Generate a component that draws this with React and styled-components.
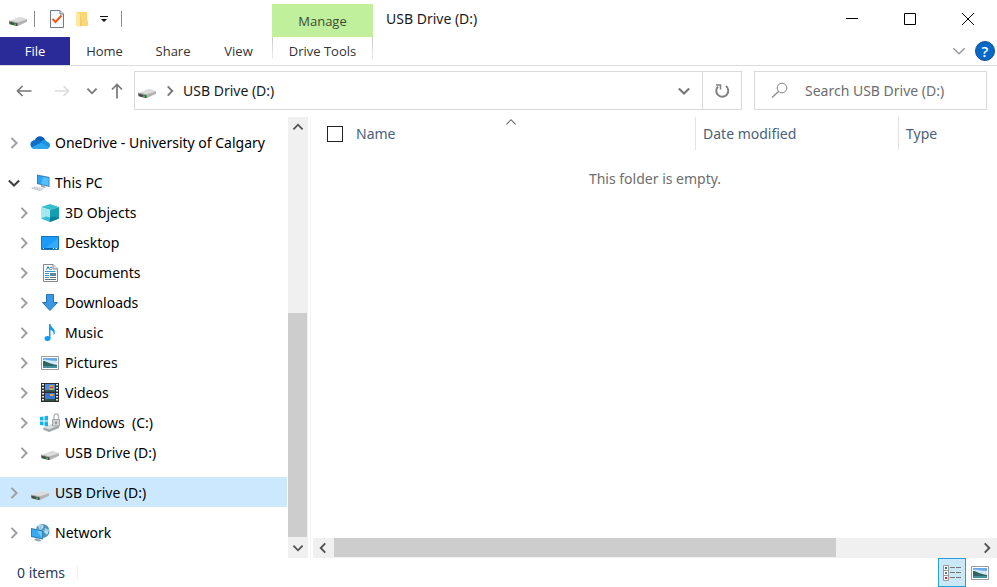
import React from "react";
import styled, { createGlobalStyle, css } from "styled-components";

const GlobalStyle = createGlobalStyle`
  *, *::before, *::after { box-sizing: border-box; }
  html, body { margin: 0; }
  body {
    background: #fff;
    color: #191919;
    font-family: "Noto Sans", "Open Sans", sans-serif;
    font-size: 14px;
    line-height: 20px;
  }
  button, input { font: inherit; color: inherit; }
  svg { display: block; flex: none; }
`;

/* ---------- shared ---------- */

const Window = styled.div`
  display: flex;
  flex-direction: column;
  min-height: 100vh;
  background: #fff;
`;

const PlainButton = styled.button`
  display: flex;
  align-items: center;
  justify-content: center;
  margin: 0;
  padding: 0;
  border: 0;
  background: transparent;
`;

/* ---------- title bar and ribbon tabs ---------- */

const TitleBar = styled.header`
  display: flex;
  height: 37px;
`;

const QuickAccess = styled.div`
  display: flex;
  align-items: center;
  width: 272px;
  padding-left: 8px;
`;

const QuickButton = styled(PlainButton)`
  width: ${(p) => p.$width}px;
  height: 24px;
`;

const Divider = styled.span`
  width: 1px;
  height: 16px;
  margin: 0 ${(p) => p.$after}px 0 ${(p) => p.$before}px;
  background: #8c8c8c;
`;

const ContextLabel = styled.div`
  display: flex;
  align-items: center;
  justify-content: center;
  align-self: flex-end;
  width: 101px;
  height: 33px;
  background: #c1f09c;
  color: #3b4a33;
  font-family: "Open Sans", "Noto Sans", sans-serif;
  font-size: 13px;
`;

const WindowTitle = styled.h1`
  flex: 1;
  margin: 0;
  padding: 9px 0 0 13px;
  font-size: 14px;
  font-weight: 400;
  line-height: 20px;
`;

const WindowButton = styled(PlainButton)`
  width: 58px;
  height: 37px;
`;

const TabBar = styled.nav`
  display: flex;
  height: 29px;
  border-bottom: 1px solid #dadbdc;
  font-family: "Open Sans", "Noto Sans", sans-serif;
  font-size: 13px;
`;

const Tab = styled(PlainButton)`
  width: ${(p) => p.$width}px;
  color: #333;
  ${(p) =>
    p.$file &&
    css`
      background: #2a2a99;
      color: #fff;
    `}
`;

const ContextTab = styled(Tab)`
  height: 22px;
  margin-left: auto;
  padding-top: 6px;
  border: 1px solid;
  border-width: 0 1px;
  border-image: linear-gradient(#c8c8c8, #eeeeee) 1;
`;

const MainTabs = styled.div`
  display: flex;
  width: 373px;
`;

const RibbonTools = styled.div`
  display: flex;
  align-items: center;
  gap: 6px;
  margin-left: auto;
  padding-right: 2px;
`;

/* ---------- address row ---------- */

const AddressRow = styled.div`
  display: flex;
  align-items: center;
  padding: 5px 10px 7px 8px;
`;

const NavButtons = styled.div`
  display: flex;
  width: 126px;
`;

const NavButton = styled(PlainButton)`
  width: ${(p) => p.$width}px;
  height: 32px;
`;

const AddressBox = styled.div`
  display: flex;
  align-items: center;
  flex: 1;
  height: 39px;
  border: 1px solid #d9d9d9;
`;

const Crumb = styled(PlainButton)`
  padding: 0 0 0 2px;
  gap: 5px;
`;

const AddressActions = styled.div`
  display: flex;
  align-self: stretch;
  margin-left: auto;
`;

const AddressButton = styled(PlainButton)`
  width: ${(p) => p.$width}px;
  border-left: ${(p) => (p.$line ? "1px solid #d9d9d9" : "0")};
`;

const SearchBox = styled.label`
  display: flex;
  align-items: center;
  gap: 17px;
  width: 233px;
  height: 39px;
  margin-left: 12px;
  padding-left: 16px;
  border: 1px solid #d9d9d9;
`;

const SearchInput = styled.input`
  flex: 1;
  min-width: 0;
  padding: 0;
  border: 0;
  outline: 0;
  background: transparent;
  &::placeholder {
    color: #6d6d6d;
    opacity: 1;
  }
`;

/* ---------- body ---------- */

const Body = styled.div`
  display: flex;
  flex: 1;
`;

const Sidebar = styled.aside`
  display: flex;
  width: 311px;
  border-right: 1px solid #f4f4f4;
`;

const Tree = styled.ul`
  flex: 1;
  margin: 0;
  padding: 10px 1px 10px 0;
  list-style: none;
`;

const TreeItem = styled.li`
  display: flex;
  align-items: center;
  height: 30px;
  margin-top: ${(p) => (p.$spaced ? 10 : 0)}px;
  padding: 2px 0 0 ${(p) => (p.$nested ? 15 : 5)}px;
  background: ${(p) => (p.$selected ? "#cce8ff" : "transparent")};
`;

const Expander = styled(PlainButton)`
  width: 18px;
  height: 20px;
  margin-right: 7px;
`;

const TreeLabel = styled.button`
  display: flex;
  align-items: center;
  gap: 5px;
  padding: 0;
  border: 0;
  background: transparent;
  color: #000;
  white-space: pre;
`;

const VerticalTrack = styled.div`
  display: flex;
  flex-direction: column;
  width: 20px;
  margin-right: 2px;
  background: #f0f0f0;
`;

const ScrollButton = styled(PlainButton)`
  width: 20px;
  height: 20px;
`;

const VerticalSpace = styled.div`
  display: flex;
  flex-direction: column;
  justify-content: flex-end;
  flex: 1;
  padding-bottom: 1px;
`;

const VerticalThumb = styled.div`
  width: 19px;
  height: 56%;
  background: #cdcdcd;
`;

const Content = styled.main`
  display: flex;
  flex-direction: column;
  flex: 1;
  min-width: 0;
  padding-left: 2px;
`;

const FileTable = styled.table`
  width: 100%;
  border-collapse: separate;
  border-spacing: 0;
  table-layout: fixed;
`;

const HeadCell = styled.th`
  position: relative;
  width: ${(p) => (p.$width ? `${p.$width}px` : "auto")};
  height: 33px;
  padding: 0 0 0 7px;
  border-right: ${(p) => (p.$width ? "1px solid #e2e2e2" : "0")};
  color: #4c607a;
  font-weight: 400;
  text-align: left;
`;

const NameHead = styled.div`
  display: flex;
  align-items: center;
  gap: 13px;
  padding-left: 7px;
`;

const CheckBox = styled.input`
  appearance: none;
  width: 16px;
  height: 16px;
  margin: 0;
  border: 1px solid #222;
  background: #fff;
`;

const SortMark = styled.span`
  position: absolute;
  top: -3px;
  right: 176px;
`;

const EmptyCell = styled.td`
  height: 58px;
  padding: 0;
  color: #6d6d6d;
  text-align: center;
`;

const HorizontalTrack = styled.div`
  display: flex;
  height: 20px;
  margin-top: auto;
  background: #f0f0f0;
`;

const HorizontalSpace = styled.div`
  flex: 1;
  padding-left: 1px;
`;

const HorizontalThumb = styled.div`
  width: 78%;
  height: 19px;
  background: #cdcdcd;
`;

/* ---------- status bar ---------- */

const StatusBar = styled.footer`
  display: flex;
  align-items: center;
  height: 29px;
  padding-left: 17px;
  color: #26395f;
`;

const StatusText = styled.span`
  width: 61px;
  border-right: 1px solid #f0f0f0;
  line-height: 14px;
`;

const ViewButtons = styled.div`
  display: flex;
  margin-left: auto;
  padding-right: 3px;
`;

const ViewButton = styled(PlainButton)`
  width: 28px;
  height: 29px;
  border: 1px solid ${(p) => (p.$active ? "#26a0da" : "transparent")};
  background: ${(p) => (p.$active ? "#cbe8f6" : "transparent")};
`;

/* ---------- icons ---------- */

const paths = {
  right: "M5 3 L9 7 L5 11",
  left: "M9 3 L5 7 L9 11",
  down: "M3 5 L7 9 L11 5",
  up: "M3 9 L7 5 L11 9",
};

const Chevron = ({ to, color = "#a0a0a0", weight = 1.6, size = 16 }) => (
  <svg width={size} height={size} viewBox="0 0 14 14" fill="none" stroke={color} strokeWidth={weight} aria-hidden="true">
    <path d={paths[to]} />
  </svg>
);

const Icon = ({ children, width = 20, height = 20 }) => (
  <svg width={width} height={height} viewBox={`0 0 ${width} ${height}`} aria-hidden="true">
    {children}
  </svg>
);

const DriveIcon = () => (
  <Icon>
    <path d="M1 12.500 C1 12 2 11.500 3 11.200 L11 8.200 C12 8 13 8 14 8.300 L18.500 9.800 L19 10.500 L10 14 Z" fill="#dcdcdc" />
    <path d="M9.500 13.500 L19 10.200 V12.800 L10 17 Z" fill="#b2b2b2" />
    <path d="M1 12 L9.700 14 V17 L8.500 17 L1.500 15.200 Z" fill="#484b4a" />
    <path d="M1 12 L9.700 14" stroke="#a6a6a6" />
    <path d="M6 15 L8 15.500" stroke="#35c946" strokeWidth="1.300" />
  </Icon>
);

const CloudIcon = () => (
  <Icon>
    <path d="M5 7 C6.500 2 13.500 2 15 7 L13 12 L5 9 Z" fill="#0a5bb8" />
    <path d="M4.500 15.500 C-1 15 -1 7.500 5 7 C7 6 9 6.500 11 8 L13 15 Z" fill="#0f6fca" />
    <path d="M11 9 C13 6.500 15.500 6.500 17 8.800 C21 9.500 21 15 17 16 H13 Z" fill="#1c91e3" />
    <path d="M1.500 14.500 L11 9.500 L19 14.500 C18 15.800 17 16 16 16 H5 C3.500 16 2.500 15.500 1.500 14.500 Z" fill="#2ba6ee" />
  </Icon>
);

const PcIcon = () => (
  <Icon>
    <path d="M7 1.500 L19.500 4 V14 L7 11 Z" fill="#3b83b5" />
    <path d="M8 2.800 L18.500 5 V12.700 L8 10.200 Z" fill="#28a4f3" />
    <path d="M13 3.900 L18.500 5 V12.700 L11 11 Z" fill="#55bdf8" />
    <path d="M11 12 L14 12.700 L16.500 15 L11 14 Z" fill="#9aa3ac" />
    <path d="M0 15 L6 13 L15 15.500 L10 18.500 Z" fill="#dfe3e8" />
    <path d="M2 15.200 L10 17.400 M4 14.400 L12 16.500" stroke="#bcc3cb" strokeDasharray="1.500 1" />
  </Icon>
);

const CubeIcon = () => (
  <Icon>
    <path d="M1 4 L10 1 L19 4 L10 7 Z" fill="#35bfd0" />
    <path d="M1 4 L10 7 V19 L1 15.500 Z" fill="#a4e9ec" />
    <path d="M19 4 L10 7 V19 L19 15.500 Z" fill="#149fb1" />
    <path d="M1 15.500 L6 13.500 L10 14.500 V19 Z" fill="#32bfd4" />
    <path d="M10 14.500 L15 13.500 L19 15.500 L10 19 Z" fill="#0a7f97" />
  </Icon>
);

const DesktopIcon = () => (
  <Icon>
    <path d="M1.500 3.500 H18.500 V16.500 H1.500 Z" fill="#1c9bf7" stroke="#1474bd" />
    <path d="M6 15 L18 5 V15 Z" fill="#36a9fd" />
    <path d="M2 15.500 H18" stroke="#1163a1" />
    <path d="M3 15.500 H4 M13 15.500 H14 M15.500 15.500 H17" stroke="#fff" />
  </Icon>
);

const DocumentIcon = () => (
  <Icon>
    <path d="M3.500 1.500 H13 L17.500 6 V18.500 H3.500 Z" fill="#fafcfd" stroke="#85898c" />
    <path d="M13 1.500 V6 H17.500" fill="#e2e5e7" stroke="#85898c" />
    <path d="M6.500 6.500 L8 3.500 L9.500 6.500" stroke="#2e7fbe" fill="none" />
    <path d="M10 4.500 H12 M10 6.500 H12 M5 8.500 H15.500 M5 10.500 H9 M5 12.500 H9 M5 14.500 H9" stroke="#3c93d4" />
    <path d="M10 10 H16 V13 H10 Z" fill="#5c87a5" />
    <path d="M10 14.500 H16 M5 16.500 H16" stroke="#667079" />
  </Icon>
);

const DownloadIcon = () => (
  <Icon>
    <path d="M6.500 1.500 H13.500 V9.500 H17.500 L10 17.500 L2.500 9.500 H6.500 Z" fill="#3c97e2" stroke="#2474b7" />
  </Icon>
);

const MusicIcon = () => (
  <Icon>
    <ellipse cx="7.500" cy="15.500" rx="3" ry="2.500" fill="#109bf2" />
    <path d="M9 1 H10.500 C11 5 15.500 5 14.800 10.500 L13.500 12 C14 8.500 12.500 7.500 10.500 7 V15.500 H9 Z" fill="#109bf2" />
  </Icon>
);

const PictureIcon = () => (
  <Icon>
    <path d="M1.500 3.500 H18.500 V16.500 H1.500 Z" fill="#fff" stroke="#9b9b9b" />
    <path d="M3 5 H17 V15 H3 Z" fill="#6ba9e8" />
    <path d="M3 7 C7 6 10 8 17 8 V12 H3 Z" fill="#d2e9f8" />
    <path d="M3 8 C6 7.500 8 10.500 17 12 V13 H3 Z" fill="#2f6562" />
    <path d="M3 13 H17 V15 H3 Z" fill="#468f9d" />
  </Icon>
);

const VideoIcon = () => (
  <Icon>
    <path d="M1 0 H19 V19 H1 Z" fill="#2d2d2d" />
    <path d="M5 1 H15 V9 H5 Z" fill="#4d8ae2" />
    <path d="M5 10 H15 V18 H5 Z" fill="#3b78d6" />
    <path d="M5 7.500 L9 7 L15 7.500 V9 H5 Z M5 16.500 L9 16 L15 16 V18 H5 Z" fill="#28533a" />
    <circle cx="11.500" cy="4.500" r="2.500" fill="#e5b530" />
    <path d="M9.500 4.500 H13.500" stroke="#cd3e35" strokeWidth="1.500" />
    <path d="M10 11 H14 L13 13 H10 Z" fill="#e0ab3c" />
    <path d="M3 1 V19 M17 1 V19" stroke="#e9e9e9" strokeWidth="2" strokeDasharray="1.500 1.500" />
  </Icon>
);

const WindowsDriveIcon = () => (
  <Icon>
    <path d="M4 14 L13 11 L19 13 V15 L9 19 L3 16.500 Z" fill="#9da3a9" />
    <path d="M3.500 14.500 L13 10.500 L19 12.500 L9 16.500 Z" fill="#dde0e3" />
    <path d="M0 4 L3.500 3.500 V7.500 H0 Z M4.500 3.300 L8 2.800 V7.500 H4.500 Z M0 8.500 H3.500 V12.500 L0 12 Z M4.500 8.500 H8 V13.200 L4.500 12.700 Z" fill="#12b4ef" />
    <path d="M14 7 V3.500 C14 0 18.500 0 18.500 3.500 V7" fill="none" stroke="#aeb3b7" strokeWidth="1.300" />
    <path d="M12.500 6.500 H19.500 V13 H12.500 Z" fill="#cfd3d6" stroke="#a0a6ab" />
    <path d="M16 8.500 V11" stroke="#5c6267" />
  </Icon>
);

const NetworkIcon = () => (
  <Icon>
    <circle cx="12.500" cy="8" r="7" fill="#4f93bb" />
    <path d="M8 3 C11 0 15 2 13 5 L10 8 Z M15 5 L19 7 L17 12 L14 9 Z" fill="#b4dced" />
    <path d="M6 5 C10 8 15 8 19 6 M12 1 C9 5 10 12 14 15" stroke="#86bed8" fill="none" />
    <path d="M1 5 L13 7.500 V16.500 L1 14 Z" fill="#2d7fb5" />
    <path d="M2 6.300 L12 8.400 V15.200 L2 13 Z" fill="#36aaf4" />
    <path d="M7 7.400 L12 8.400 V15.200 Z" fill="#72c9ff" />
    <path d="M6 15 L9 15.800 L12 18 L8 18.500 L4 17 Z" fill="#9ca8b0" />
  </Icon>
);

const PropertiesIcon = () => (
  <Icon width={16} height={18}>
    <path d="M1.500 .5 H11 L14.500 4 V17.500 H1.500 Z" fill="#f7fafc" stroke="#737b84" />
    <path d="M11 .5 V4 H14.500" fill="#dce1e5" stroke="#737b84" />
    <path d="M3.500 9 L6.500 12 L12.500 5.500" fill="none" stroke="#f05a14" strokeWidth="2" />
  </Icon>
);

const FolderIcon = () => (
  <Icon width={14} height={16}>
    <path d="M1 1 H12 V9 L13 10 V15 H1 Z" fill="#fbd775" />
    <path d="M1 1 L5 3 V16 L1 14 Z" fill="#ffe9a5" />
    <path d="M5 3 V16 L7 14 V10 Z" fill="#f3cc6a" />
  </Icon>
);

const CustomizeIcon = () => (
  <Icon width={8} height={8}>
    <path d="M0 1 H8 V2 H0 Z M1 4 H7 L4 7 Z" fill="#111" />
  </Icon>
);

const ArrowIcon = ({ turn = 0, color = "#777" }) => (
  <Icon width={16} height={16}>
    <path
      d="M15.500 8 H1.500 M6.500 3 L1.500 8 L6.500 13"
      transform={`rotate(${turn} 8 8)`}
      fill="none"
      stroke={color}
      strokeWidth="1.700"
    />
  </Icon>
);

const RefreshIcon = () => (
  <Icon width={16} height={16}>
    <path d="M12 3 A6 6 0 1 1 4 3.500" fill="none" stroke="#808080" strokeWidth="2" />
    <path d="M2 2 H6.500 V6.500" fill="none" stroke="#808080" strokeWidth="1.500" />
  </Icon>
);

const SearchIcon = () => (
  <Icon width={17} height={17}>
    <circle cx="11" cy="6" r="4.800" fill="none" stroke="#858585" />
    <path d="M7.500 9.500 L1 15.500" stroke="#858585" strokeWidth="1.200" />
  </Icon>
);

const HelpBadge = styled(PlainButton)`
  width: 20px;
  height: 20px;
  border: 1px solid #164f86;
  border-radius: 50%;
  background: #0669c9;
  color: #fff;
  font-size: 15px;
  font-weight: 600;
  line-height: 18px;
`;

const DetailsIcon = () => (
  <Icon width={20} height={18}>
    <g fill="#fff" stroke="#999">
      <path d="M1.500 1.500 h5 v5 h-5 Z M1.500 6.500 h5 v5 h-5 Z M1.500 11.500 h5 v5 h-5 Z" />
    </g>
    <path d="M3 3 h2 v2 h-2 Z" fill="#26757d" />
    <path d="M3 8 h2 v2 h-2 Z" fill="#657a9b" />
    <path d="M3 13 h2 v2 h-2 Z" fill="#c52824" />
    <path d="M8 3.500 h5 M14 3.500 h5 M8 8.500 h5 M14 8.500 h5 M8 13.500 h5 M14 13.500 h5" stroke="#777" />
  </Icon>
);

/* ---------- page ---------- */

const places = [
  { label: "OneDrive - University of Calgary", Glyph: CloudIcon },
  { label: "This PC", Glyph: PcIcon, spaced: true, open: true },
  { label: "3D Objects", Glyph: CubeIcon, nested: true },
  { label: "Desktop", Glyph: DesktopIcon, nested: true },
  { label: "Documents", Glyph: DocumentIcon, nested: true },
  { label: "Downloads", Glyph: DownloadIcon, nested: true },
  { label: "Music", Glyph: MusicIcon, nested: true },
  { label: "Pictures", Glyph: PictureIcon, nested: true },
  { label: "Videos", Glyph: VideoIcon, nested: true },
  { label: "Windows  (C:)", Glyph: WindowsDriveIcon, nested: true },
  { label: "USB Drive (D:)", Glyph: DriveIcon, nested: true },
  { label: "USB Drive (D:)", Glyph: DriveIcon, spaced: true, selected: true },
  { label: "Network", Glyph: NetworkIcon, spaced: true },
];

export default function App() {
  return (
    <Window>
      <GlobalStyle />
      <TitleBar>
        <QuickAccess>
          <DriveIcon />
          <Divider $before={6} $after={12} />
          <QuickButton $width={20} aria-label="Properties"><PropertiesIcon /></QuickButton>
          <QuickButton $width={30} aria-label="New folder"><FolderIcon /></QuickButton>
          <QuickButton $width={14} aria-label="Customize toolbar"><CustomizeIcon /></QuickButton>
          <Divider $before={10} $after={0} />
        </QuickAccess>
        <ContextLabel>Manage</ContextLabel>
        <WindowTitle>USB Drive (D:)</WindowTitle>
        <WindowButton aria-label="Minimize">
          <Icon width={12} height={12}><path d="M0 5.500 H12" stroke="#000" /></Icon>
        </WindowButton>
        <WindowButton aria-label="Maximize">
          <Icon width={12} height={12}><path d="M.5 .5 H11.500 V11.500 H.5 Z" fill="none" stroke="#000" /></Icon>
        </WindowButton>
        <WindowButton aria-label="Close">
          <Icon width={12} height={12}><path d="M0 0 L12 12 M12 0 L0 12" stroke="#000" /></Icon>
        </WindowButton>
      </TitleBar>

      <TabBar>
        <MainTabs>
          <Tab $width={70} $file>File</Tab>
          <Tab $width={69}>Home</Tab>
          <Tab $width={68}>Share</Tab>
          <Tab $width={63}>View</Tab>
          <ContextTab $width={101}>Drive Tools</ContextTab>
        </MainTabs>
        <RibbonTools>
          <PlainButton aria-label="Expand ribbon"><Chevron to="down" color="#999" weight={1} size={20} /></PlainButton>
          <HelpBadge aria-label="Help">?</HelpBadge>
        </RibbonTools>
      </TabBar>

      <AddressRow>
        <NavButtons>
          <NavButton $width={32} aria-label="Back"><ArrowIcon /></NavButton>
          <NavButton $width={44} aria-label="Forward"><ArrowIcon turn={180} color="#dcdcdc" /></NavButton>
          <NavButton $width={16} aria-label="Recent locations"><Chevron to="down" color="#777" /></NavButton>
          <NavButton $width={34} aria-label="Up"><ArrowIcon turn={90} /></NavButton>
        </NavButtons>
        <AddressBox>
          <Crumb>
            <DriveIcon />
            <Chevron to="right" color="#777" />
            USB Drive (D:)
          </Crumb>
          <AddressActions>
            <AddressButton $width={37} aria-label="Previous locations"><Chevron to="down" color="#777" size={18} /></AddressButton>
            <AddressButton $width={39} $line aria-label="Refresh"><RefreshIcon /></AddressButton>
          </AddressActions>
        </AddressBox>
        <SearchBox>
          <SearchIcon />
          <SearchInput type="text" placeholder="Search USB Drive (D:)" aria-label="Search USB Drive (D:)" />
        </SearchBox>
      </AddressRow>

      <Body>
        <Sidebar>
          <Tree>
            {places.map(({ label, Glyph, nested, spaced, selected, open }, i) => (
              <TreeItem key={i} $nested={nested} $spaced={spaced} $selected={selected}>
                <Expander aria-label={`${open ? "Collapse" : "Expand"} ${label}`}>
                  <Chevron to={open ? "down" : "right"} color={open ? "#404040" : "#a0a0a0"} size={18} />
                </Expander>
                <TreeLabel><Glyph />{label}</TreeLabel>
              </TreeItem>
            ))}
          </Tree>
          <VerticalTrack>
            <ScrollButton aria-label="Scroll up"><Chevron to="up" color="#505050" /></ScrollButton>
            <VerticalSpace><VerticalThumb /></VerticalSpace>
            <ScrollButton aria-label="Scroll down"><Chevron to="down" color="#505050" /></ScrollButton>
          </VerticalTrack>
        </Sidebar>

        <Content>
          <FileTable>
            <thead>
              <tr>
                <HeadCell $width={383}>
                  <NameHead>
                    <CheckBox type="checkbox" aria-label="Select all" />
                    Name
                  </NameHead>
                  <SortMark><Chevron to="up" color="#666" weight={1} /></SortMark>
                </HeadCell>
                <HeadCell $width={203}>Date modified</HeadCell>
                <HeadCell>Type</HeadCell>
              </tr>
            </thead>
            <tbody>
              <tr><EmptyCell colSpan={3}>This folder is empty.</EmptyCell></tr>
            </tbody>
          </FileTable>
          <HorizontalTrack>
            <ScrollButton aria-label="Scroll left"><Chevron to="left" color="#505050" /></ScrollButton>
            <HorizontalSpace><HorizontalThumb /></HorizontalSpace>
            <ScrollButton aria-label="Scroll right"><Chevron to="right" color="#505050" /></ScrollButton>
          </HorizontalTrack>
        </Content>
      </Body>

      <StatusBar>
        <StatusText>0 items</StatusText>
        <ViewButtons>
          <ViewButton $active aria-label="Details view"><DetailsIcon /></ViewButton>
          <ViewButton aria-label="Large thumbnails view"><PictureIcon /></ViewButton>
        </ViewButtons>
      </StatusBar>
    </Window>
  );
}
